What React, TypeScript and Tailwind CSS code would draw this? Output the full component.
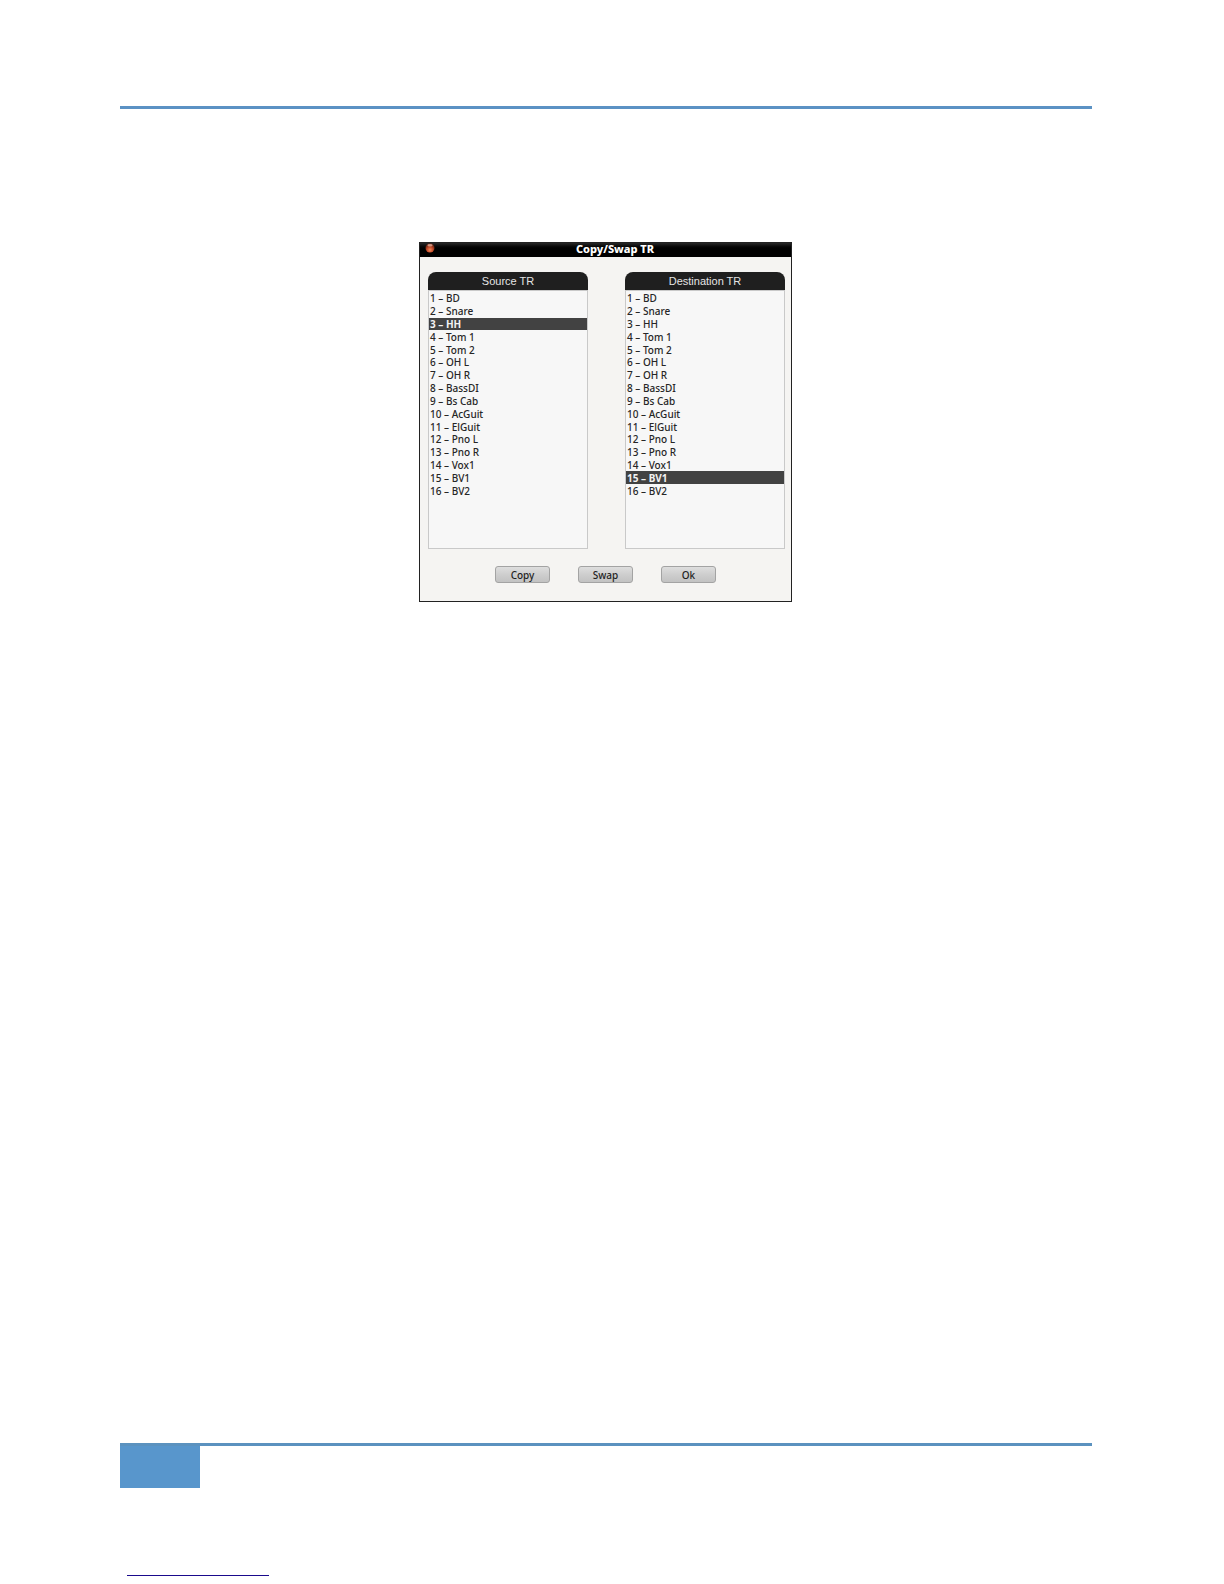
import { useState } from "react";

const tracks = [
  "BD", "Snare", "HH", "Tom 1", "Tom 2", "OH L", "OH R", "BassDI",
  "Bs Cab", "AcGuit", "ElGuit", "Pno L", "Pno R", "Vox1", "BV1", "BV2",
];

function TrackList({ title, initial }: { title: string; initial: number }) {
  const [selected, setSelected] = useState(initial);
  return (
    <section className="flex w-40 flex-col">
      <h2 className="h-[18px] rounded-t-lg bg-[#1f1f1f] text-center font-['Liberation_Sans',sans-serif] text-[11px] leading-[18px] text-[#e4e4e4]">
        {title}
      </h2>
      <div className="h-[259px] border border-[#c9c9c9] bg-[#f7f7f7] pt-px">
        <div role="listbox" aria-label={title} className="grid h-[205px] grid-rows-16">
          {tracks.map((name, i) => (
            <button
              key={name}
              type="button"
              role="option"
              aria-selected={selected === i}
              onClick={() => setSelected(i)}
              className={
                selected === i
                  ? "min-h-0 bg-[#424242] px-px text-left text-[10px] leading-3 font-bold text-[#f2f2f2]"
                  : "min-h-0 px-px text-left text-[10px] leading-3 font-medium text-[#262626]"
              }
            >
              {i + 1} – {name}
            </button>
          ))}
        </div>
      </div>
    </section>
  );
}

function ActionButton({ label }: { label: string }) {
  return (
    <button
      type="button"
      className="h-[17px] w-[55px] rounded-[3px] border border-[#a3a3a3] bg-linear-to-b from-[#dedede] via-[#cecece] to-[#c2c2c2] text-[10px] leading-[14px] font-medium text-[#1f1f1f]"
    >
      {label}
    </button>
  );
}

export default function App() {
  return (
    <div className="flex min-h-screen flex-col bg-white pt-[106px] pr-[132px] pb-2 pl-[120px] font-['Noto_Sans',sans-serif]">
      <header className="h-[3px] bg-[#5b92c4]" />

      <main className="mt-[133px] flex justify-center pr-px">
        <div role="dialog" aria-labelledby="dialog-title" className="w-[373px] border border-[#222222] bg-[#f5f4f2]">
          <div className="flex h-3.5 gap-1 bg-linear-to-b from-[#282828] via-black to-black pl-[5px]">
            <button type="button" aria-label="Close" className="h-2.5 w-2.5">
              <svg viewBox="0 0 10 10" className="h-2.5 w-2.5" aria-hidden="true">
                <defs>
                  <radialGradient id="close-fill" cx="50%" cy="72%" r="60%">
                    <stop offset="0" stopColor="#f08a5c" />
                    <stop offset="0.55" stopColor="#c24a28" />
                    <stop offset="1" stopColor="#6d2413" />
                  </radialGradient>
                </defs>
                <circle cx="5" cy="5" r="4.5" fill="url(#close-fill)" />
                <ellipse cx="5" cy="2.3" rx="2.6" ry="1.2" fill="#e6b6a2" opacity="0.75" />
              </svg>
            </button>
            <h1 id="dialog-title" className="flex-1 text-center text-[11px] leading-3 font-extrabold text-white">
              Copy/Swap TR
            </h1>
          </div>
          <div className="flex justify-between pt-[15px] pr-1.5 pl-2">
            <TrackList title="Source TR" initial={2} />
            <TrackList title="Destination TR" initial={14} />
          </div>
          <div className="flex justify-center gap-7 pt-[17px] pb-[18px]">
            <ActionButton label="Copy" />
            <ActionButton label="Swap" />
            <ActionButton label="Ok" />
          </div>
        </div>
      </main>

      <footer className="mt-auto">
        <div className="h-[3px] bg-[#5b92bf]" />
        <div className="h-[42px] w-20 bg-[#5896cc]" />
        <a href="#" aria-label="Contents" className="mt-[87px] ml-[7px] block h-px w-[142px] bg-[#1a0a8c]" />
      </footer>
    </div>
  );
}
